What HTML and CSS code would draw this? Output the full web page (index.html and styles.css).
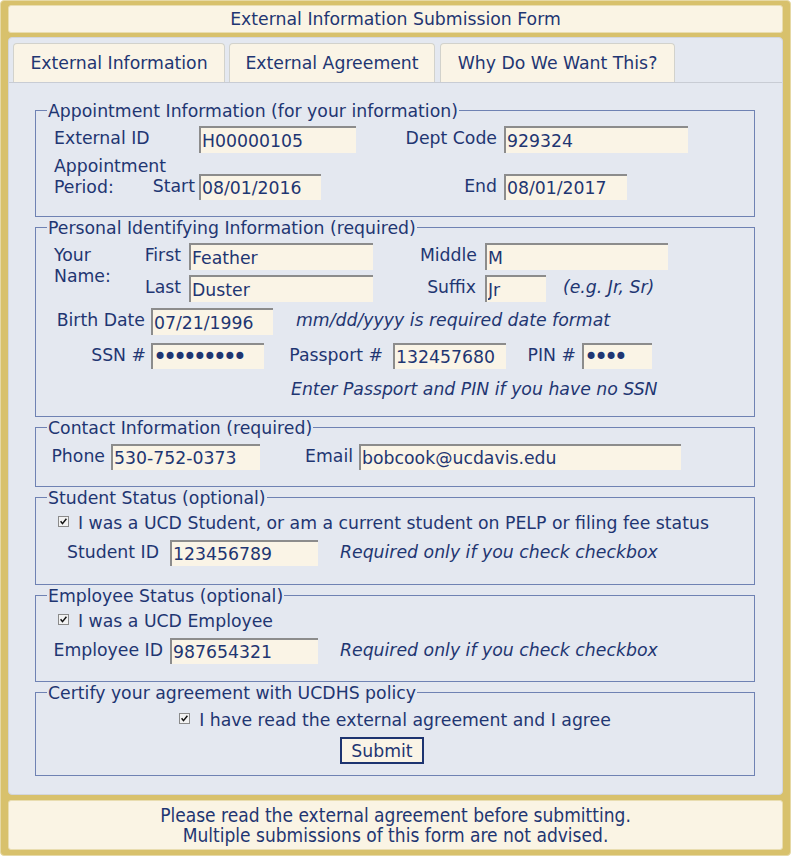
FILE: index.html
```html
<!DOCTYPE html>
<html lang="en">
<head>
<meta charset="utf-8">
<title>External Information Submission Form</title>
<link rel="stylesheet" href="styles.css">
</head>
<body>
<div class="widget">
  <div class="title">External Information Submission Form</div>
  <div class="panel">
    <div class="tabs">
      <div class="tab tab1 active">External Information</div>
      <div class="tab tab2">External Agreement</div>
      <div class="tab tab3">Why Do We Want This?</div>
    </div>

    <fieldset class="fs fs-appt">
      <legend>Appointment Information (for your information)</legend>
      <div class="row mt5">
        <div class="lbl ml18 w145">External ID</div>
        <input class="fld w157" type="text" value="H00000105">
        <div class="lbl right w148 pr7">Dept Code</div>
        <input class="fld w184" type="text" value="929324">
      </div>
      <div class="row mt1">
        <div class="lbl ml18 w95">Appointment<br>Period:</div>
        <div class="row mt20">
          <div class="lbl right w50 pr4">Start</div>
          <input class="fld w122 h26" type="text" value="08/01/2016">
          <div class="lbl right w183 pr7">End</div>
          <input class="fld w123 h26" type="text" value="08/01/2017">
        </div>
      </div>
    </fieldset>

    <fieldset class="fs fs-personal">
      <legend>Personal Identifying Information (required)</legend>
      <div class="row mt5">
        <div class="lbl ml18 w90">Your<br>Name:</div>
        <div class="col">
          <div class="row">
            <div class="lbl right w45 pr8">First</div>
            <input class="fld w184" type="text" value="Feather">
            <div class="lbl right w112 pr8">Middle</div>
            <input class="fld w183" type="text" value="M">
          </div>
          <div class="row mt5">
            <div class="lbl right w45 pr8">Last</div>
            <input class="fld w184" type="text" value="Duster">
            <div class="lbl right w112 pr9">Suffix</div>
            <input class="fld w61" type="text" value="Jr">
            <div class="lbl hint ml17">(e.g. Jr, Sr)</div>
          </div>
        </div>
      </div>
      <div class="row mt6">
        <div class="lbl right w115 pr6">Birth Date</div>
        <input class="fld w122" type="text" value="07/21/1996">
        <div class="lbl hint ml23">mm/dd/yyyy is required date format</div>
      </div>
      <div class="row mt8">
        <div class="lbl right w115 pr5">SSN #</div>
        <input class="fld pw w113 h26" type="password" value="123456789">
        <div class="lbl right w129 pr10">Passport #</div>
        <input class="fld w113 h26" type="text" value="132457680">
        <div class="lbl right w76 pr6">PIN #</div>
        <input class="fld pw w70 h26" type="password" value="1234">
      </div>
      <div class="row mt8">
        <div class="lbl hint ml255">Enter Passport and PIN if you have no SSN</div>
      </div>
    </fieldset>

    <fieldset class="fs fs-contact">
      <legend>Contact Information (required)</legend>
      <div class="row mt6">
        <div class="lbl right w75 pr6">Phone</div>
        <input class="fld w149 h26" type="text" value="530-752-0373">
        <div class="lbl right w99 pr6">Email</div>
        <input class="fld w322 h26" type="text" value="bobcook@ucdavis.edu">
      </div>
    </fieldset>

    <fieldset class="fs fs-student">
      <legend>Student Status (optional)</legend>
      <div class="row check-row mt3 ml22">
        <span class="cb"><svg width="11" height="11" viewBox="0 0 11 11"><rect x="0.5" y="0.5" width="10" height="10" fill="#f2f2f2" stroke="#8a8a8a"/><path d="M2.6 5.2 L4.5 7.6 L8.4 2.8" stroke="#111" stroke-width="1.5" fill="none"/></svg></span>
        <span class="lbl ml9">I was a UCD Student, or am a current student on PELP or filing fee status</span>
      </div>
      <div class="row mt8">
        <div class="lbl right w134 pr11">Student ID</div>
        <input class="fld w148 h26" type="text" value="123456789">
        <div class="lbl hint ml22">Required only if you check checkbox</div>
      </div>
    </fieldset>

    <fieldset class="fs fs-employee">
      <legend>Employee Status (optional)</legend>
      <div class="row check-row mt3 ml22">
        <span class="cb"><svg width="11" height="11" viewBox="0 0 11 11"><rect x="0.5" y="0.5" width="10" height="10" fill="#f2f2f2" stroke="#8a8a8a"/><path d="M2.6 5.2 L4.5 7.6 L8.4 2.8" stroke="#111" stroke-width="1.5" fill="none"/></svg></span>
        <span class="lbl ml9">I was a UCD Employee</span>
      </div>
      <div class="row mt8">
        <div class="lbl right w134 pr7">Employee ID</div>
        <input class="fld w148 h26" type="text" value="987654321">
        <div class="lbl hint ml22">Required only if you check checkbox</div>
      </div>
    </fieldset>

    <fieldset class="fs fs-certify">
      <legend>Certify your agreement with UCDHS policy</legend>
      <div class="row check-row center mt5">
        <span class="cb"><svg width="11" height="11" viewBox="0 0 11 11"><rect x="0.5" y="0.5" width="10" height="10" fill="#f2f2f2" stroke="#8a8a8a"/><path d="M2.6 5.2 L4.5 7.6 L8.4 2.8" stroke="#111" stroke-width="1.5" fill="none"/></svg></span>
        <span class="lbl ml9">I have read the external agreement and I agree</span>
      </div>
      <div class="row center mt8">
        <button class="submit" type="button">Submit</button>
      </div>
    </fieldset>
  </div>
  <div class="footer">Please read the external agreement before submitting.<br>Multiple submissions of this form are not advised.</div>
</div>
</body>
</html>
```

FILE: styles.css
```css
html, body {
  margin: 0;
  padding: 0;
  background: #ffffff;
}

body {
  font-family: "DejaVu Sans", Verdana, sans-serif;
  font-size: 17.3px;
  color: #1f3672;
}

.widget {
  width: 791px;
  height: 856px;
  box-sizing: border-box;
  border: 1px solid #e6d9a6;
  border-radius: 4px;
  background: #d8c16c;
  padding: 4px 7px 5px;
}

.title {
  height: 28px;
  box-sizing: border-box;
  border: 1px solid #e9ddb0;
  border-radius: 3px;
  background: #faf4e4;
  text-align: center;
  line-height: 26px;
}

.panel {
  margin-top: 4px;
  box-sizing: border-box;
  border: 1px solid #d3d6dc;
  border-radius: 4px;
  background: #e4e8f0;
  padding: 5px 0 18px;
}

.tabs {
  display: flex;
  padding-left: 4px;
  border-bottom: 1px solid #c8ccd4;
}

.tab {
  height: 39px;
  box-sizing: border-box;
  text-align: center;
  line-height: 39px;
  white-space: nowrap;
  background: #faf4e6;
  border: 1px solid #d2d2cc;
  border-bottom: none;
  border-radius: 4px 4px 0 0;
}

.tab1 { width: 212px; }
.tab2 { width: 206px; margin-left: 4px; }
.tab3 { width: 235px; margin-left: 5px; }

.fs {
  margin: 0 27px 0 26px;
  padding: 0;
  border: 1px solid #6f82b3;
  min-width: 0;
}

.fs-appt {
  margin-top: 17px;
  padding-bottom: 16px;
}

.fs-personal { padding-bottom: 18px; }
.fs-contact { padding-bottom: 16px; }
.fs-student { padding-bottom: 18px; }
.fs-employee { padding-bottom: 17px; }
.fs-certify { padding-bottom: 11px; }

legend {
  margin-left: 11px;
  padding: 2px 1px 0;
  line-height: 19px;
}

.row {
  display: flex;
  align-items: flex-start;
}

.col {
  display: flex;
  flex-direction: column;
}

.center {
  justify-content: center;
}

.lbl {
  flex: none;
  line-height: 21px;
  padding-top: 2px;
  margin-bottom: -2px;
  white-space: nowrap;
}

.right {
  text-align: right;
  box-sizing: border-box;
}

.hint {
  font-style: italic;
}

.fld {
  flex: none;
  height: 27px;
  box-sizing: border-box;
  margin: 0;
  padding: 0 2px 0 1px;
  background: #faf4e6;
  border-style: solid;
  border-width: 2px 0 0 2px;
  border-color: #8c8c8c;
  font-family: "DejaVu Sans", Verdana, sans-serif;
  font-size: 17.3px;
  color: #1f3672;
  outline: none;
}

.fld.h26 { height: 26px; }

.fld.pw {
  font-size: 24px;
  letter-spacing: -4.2px;
  padding-left: 0;
}

.check-row {
  align-items: center;
}

.cb {
  display: flex;
  width: 11px;
  height: 11px;
  flex: none;
}

.submit {
  width: 84px;
  height: 27px;
  margin-right: 26px;
  box-sizing: border-box;
  border: 2px solid #1d3470;
  background: #faf4e6;
  color: #1f3672;
  font-family: "DejaVu Sans", Verdana, sans-serif;
  font-size: 17.3px;
  padding: 1px 0 0;
  line-height: 22px;
}

.footer {
  margin-top: 5px;
  height: 50px;
  box-sizing: border-box;
  border: 1px solid #e9ddb0;
  border-radius: 3px;
  background: #faf4e4;
  padding-top: 4px;
  text-align: center;
  line-height: 20px;
  font-family: "DejaVu Sans Condensed", "DejaVu Sans", sans-serif;
  font-size: 19px;
}

/* spacing helpers */
.mt1 { margin-top: 1px; }
.mt3 { margin-top: 3px; }
.mt5 { margin-top: 5px; }
.mt6 { margin-top: 6px; }
.mt8 { margin-top: 8px; }
.mt20 { margin-top: 20px; }
.ml9 { margin-left: 9px; }
.ml17 { margin-left: 17px; }
.ml18 { margin-left: 18px; }
.ml22 { margin-left: 22px; }
.ml23 { margin-left: 23px; }
.ml255 { margin-left: 255px; }
.pr4 { padding-right: 4px; }
.pr5 { padding-right: 5px; }
.pr6 { padding-right: 6px; }
.pr7 { padding-right: 7px; }
.pr8 { padding-right: 8px; }
.pr9 { padding-right: 9px; }
.pr10 { padding-right: 10px; }
.pr11 { padding-right: 11px; }

/* widths */
.w45 { width: 45px; }
.w50 { width: 50px; }
.w61 { width: 61px; }
.w70 { width: 70px; }
.w75 { width: 75px; }
.w76 { width: 76px; }
.w90 { width: 90px; }
.w95 { width: 95px; }
.w99 { width: 99px; }
.w112 { width: 112px; }
.w113 { width: 113px; }
.w115 { width: 115px; }
.w122 { width: 122px; }
.w123 { width: 123px; }
.w129 { width: 129px; }
.w134 { width: 134px; }
.w145 { width: 145px; }
.w148 { width: 148px; }
.w149 { width: 149px; }
.w157 { width: 157px; }
.w183 { width: 183px; }
.w184 { width: 184px; }
.w322 { width: 322px; }
```
